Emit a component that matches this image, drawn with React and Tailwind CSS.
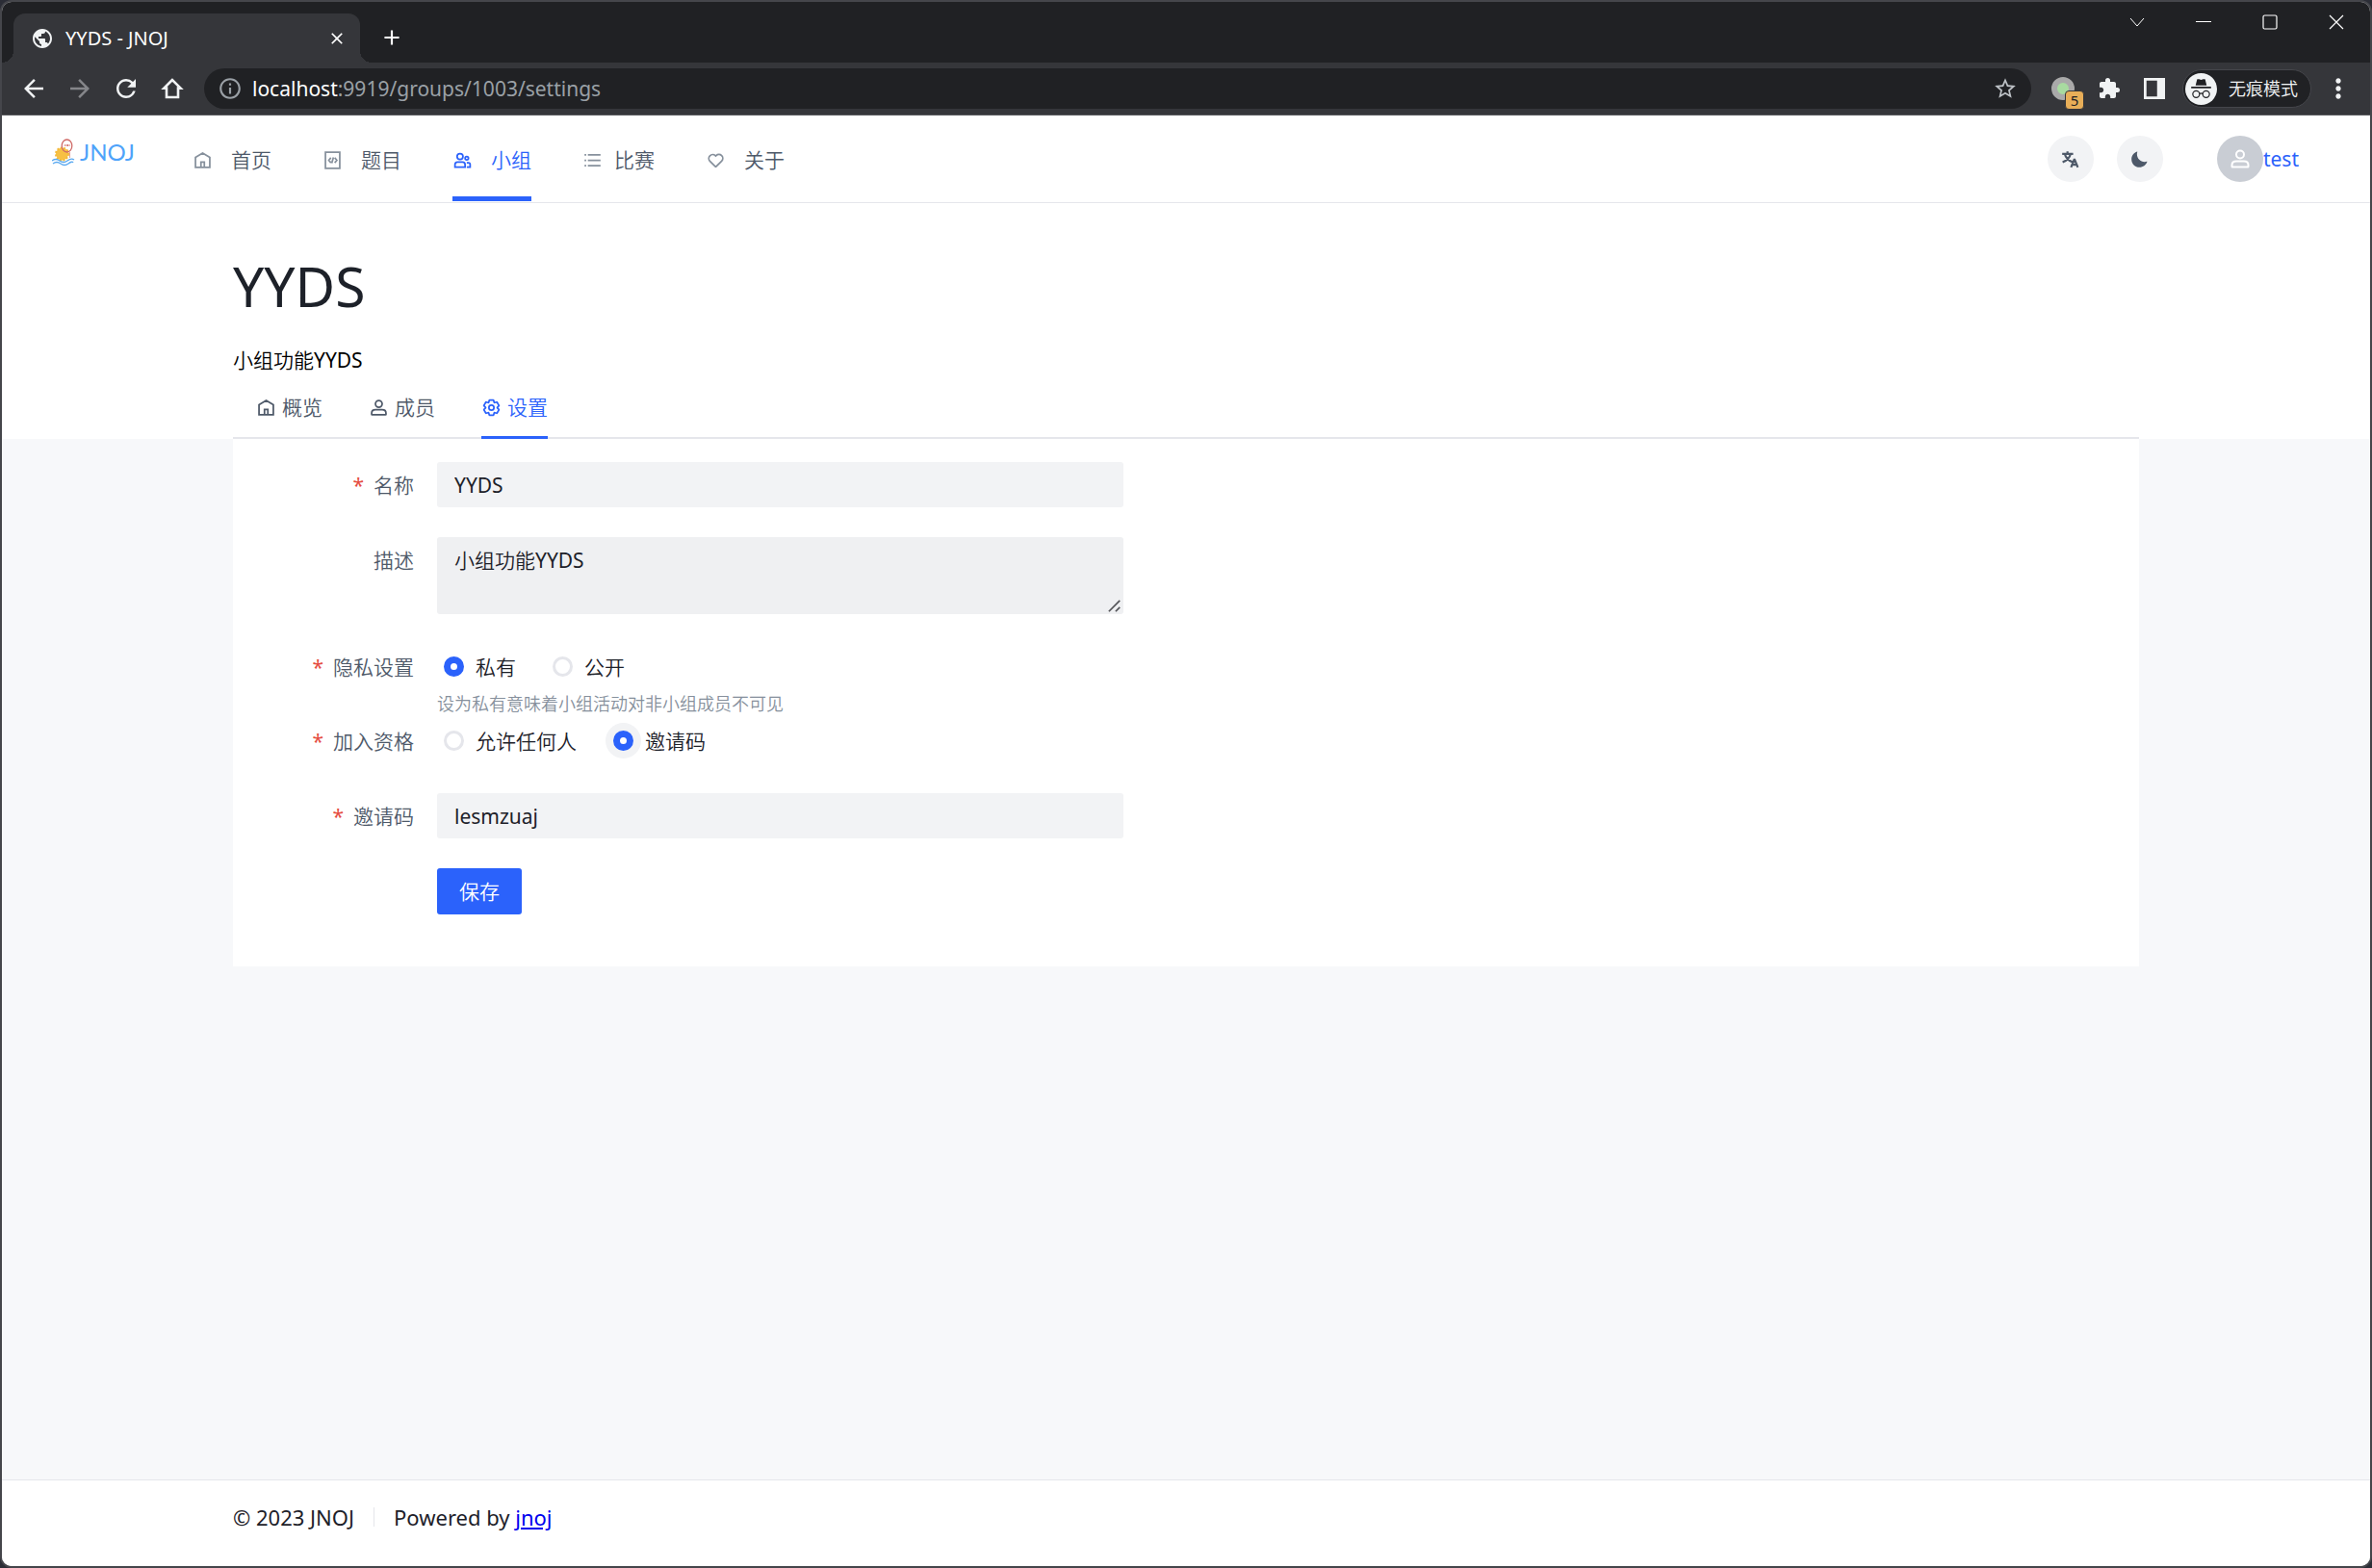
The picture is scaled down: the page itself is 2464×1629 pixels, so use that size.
import { useState } from 'react';
import { MdPublic, MdArrowBack, MdArrowForward, MdRefresh, MdInfoOutline, MdStarBorder, MdExtension, MdMoreVert, MdClose, MdAdd } from 'react-icons/md';

const navItems = [
  { key: 'home', label: '首页', icon: 'home' },
  { key: 'problems', label: '题目', icon: 'code' },
  { key: 'groups', label: '小组', icon: 'group' },
  { key: 'contests', label: '比赛', icon: 'list' },
  { key: 'about', label: '关于', icon: 'heart' },
];

const tabs = [
  { key: 'overview', label: '概览', icon: 'home' },
  { key: 'members', label: '成员', icon: 'user' },
  { key: 'settings', label: '设置', icon: 'settings' },
];

export default function App() {
  return (
    <div className="bg-[#2b2d36]">
      <div className="flex min-h-screen flex-col overflow-hidden rounded-xl border-2 border-[#45464b] bg-[#f7f8fa] font-['Noto_Sans','Noto_Sans_CJK_SC_DemiLight','Noto_Sans_CJK_SC',sans-serif] text-[21px] leading-8 text-[#1d2129]">
        <TabStrip />
        <Toolbar />
        <SiteHeader />
        <main className="grow">
          <GroupHeader />
          <SettingsForm />
        </main>
        <footer className="h-[90px] border-t border-[#e5e6eb] bg-white px-60 pt-[22px] text-[22px]">
          <div className="flex items-center">
            <span>© 2023 JNOJ</span>
            <span className="mx-5 h-5 w-px bg-[#e5e6eb]" />
            <span>
              Powered by <a href="#jnoj" className="text-[#0000ee] underline">jnoj</a>
            </span>
          </div>
        </footer>
      </div>
    </div>
  );
}

function TabStrip() {
  return (
    <div className="flex h-[63px] items-end justify-between bg-[#202124] pl-3 text-white">
      <div className="flex items-end">
        <div className="relative flex h-[51px] w-[360px] items-center rounded-t-xl bg-[#35363a] pr-[14px] pl-[18px]">
          <span className="absolute bottom-0 -left-3 size-3 bg-[radial-gradient(circle_at_0_0,transparent_12px,#35363a_12px)]" />
          <span className="absolute -right-3 bottom-0 size-3 bg-[radial-gradient(circle_at_100%_0,transparent_12px,#35363a_12px)]" />
          <MdPublic className="size-6 text-[#f1f3f4]" />
          <span className="ml-3 grow text-[20px]">YYDS - JNOJ</span>
          <button type="button" aria-label="Close tab">
            <MdClose className="size-5" />
          </button>
        </div>
        <button type="button" aria-label="New tab" className="mb-[13px] ml-5">
          <MdAdd className="size-[26px]" />
        </button>
      </div>
      <div className="flex h-full items-start gap-[53px] pt-[13px] pr-[27px]">
        <button type="button" aria-label="Search tabs"><Glyph name="chevron" /></button>
        <button type="button" aria-label="Minimize"><Glyph name="minimize" /></button>
        <button type="button" aria-label="Maximize"><Glyph name="maximize" /></button>
        <button type="button" aria-label="Close"><Glyph name="close" /></button>
      </div>
    </div>
  );
}

function Toolbar() {
  return (
    <div className="flex h-[55px] items-center border-b border-[#5a5b5f] bg-[#35363a] pr-[17px] pl-[18px] text-[#f1f3f4]">
      <div className="flex items-center gap-[18px]">
        <button type="button" aria-label="Back"><MdArrowBack className="size-[30px]" /></button>
        <button type="button" aria-label="Forward"><MdArrowForward className="size-[30px] text-[#85868a]" /></button>
        <button type="button" aria-label="Reload"><MdRefresh className="size-[30px]" /></button>
        <button type="button" aria-label="Home"><Glyph name="house" className="size-[30px]" /></button>
      </div>
      <div className="ml-[18px] flex h-[42px] grow items-center rounded-full bg-[#202124] px-[14px]">
        <MdInfoOutline className="size-[26px] text-[#9aa0a6]" />
        <span className="ml-[10px] grow text-[#9aa0a6]">
          <span className="text-white">localhost</span>:9919/groups/1003/settings
        </span>
        <MdStarBorder className="size-[26px] text-[#bdc1c6]" />
      </div>
      <div className="relative ml-[21px] size-6 rounded-full border-[6px] border-[#a9a9a9] bg-[#a8dba0]">
        <span className="absolute top-2 left-2 flex size-5 items-center justify-center rounded-[4px] border border-[#35363a] bg-[#e8ae58] text-[15px] text-[#202124]">5</span>
      </div>
      <MdExtension className="ml-6 size-6" />
      <Glyph name="panel" className="ml-6 size-[22px]" />
      <div className="ml-[18px] flex h-10 items-center rounded-full border border-[#45464b] bg-[#202124] pr-[13px] pl-[2px] text-[18px]">
        <Glyph name="incognito" className="mr-3 size-[33px]" />
        无痕模式
      </div>
      <MdMoreVert className="ml-3 size-8" />
    </div>
  );
}

function SiteHeader() {
  return (
    <header className="flex h-[91px] justify-between border-b border-[#e5e6eb] bg-white pr-[74px] pl-[52px]">
      <div className="flex">
        <a href="#home" className="mt-5 flex h-9 items-center" aria-label="JNOJ">
          <Logo />
        </a>
        <nav className="ml-14 flex gap-[53px]">
          {navItems.map((item) => (
            <a
              key={item.key}
              href={`#${item.key}`}
              className={
                item.key === 'groups'
                  ? 'flex h-[89px] items-center border-b-[5px] border-[#2b62fb] pt-2 text-[#2b62fb]'
                  : 'flex h-[89px] items-center border-b-[5px] border-transparent pt-2 text-[#4e5969]'
              }
            >
              <Icon name={item.icon} className={item.key === 'groups' ? 'size-[21px]' : 'size-[21px] text-[#86909c]'} />
              <span className={item.icon === 'list' ? 'ml-3' : 'ml-[19px]'}>{item.label}</span>
            </a>
          ))}
        </nav>
      </div>
      <div className="flex items-center">
        <button type="button" aria-label="Language" className="flex size-12 items-center justify-center rounded-full bg-[#f2f3f5] text-[#4e5969]">
          <Icon name="language" className="size-[21px]" />
        </button>
        <button type="button" aria-label="Dark mode" className="ml-6 flex size-12 items-center justify-center rounded-full bg-[#f2f3f5] text-[#4e5969]">
          <Icon name="moon" className="size-[21px]" />
        </button>
        <a href="#user" className="ml-14 flex items-center text-[#2b62fb]">
          <span className="flex size-12 items-center justify-center rounded-full bg-[#c9cdd4] text-white">
            <Icon name="user" className="size-6" />
          </span>
          test
        </a>
      </div>
    </header>
  );
}

function GroupHeader() {
  return (
    <section className="bg-white px-60 pt-11">
      <h1 className="text-[57px] leading-[84px]">YYDS</h1>
      <p className="mt-[19px] text-black">小组功能YYDS</p>
      <div className="mt-[3px] flex gap-12 border-b-2 border-[#e5e6eb] pl-6">
        {tabs.map((tab) => (
          <button
            key={tab.key}
            type="button"
            className={
              tab.key === 'settings'
                ? '-mb-[2px] flex h-[63px] items-center gap-[6px] border-b-[3px] border-[#2b62fb] text-[#2b62fb]'
                : '-mb-[2px] flex h-[63px] items-center gap-[6px] border-b-[3px] border-transparent text-[#4e5969]'
            }
          >
            <Icon name={tab.icon} className="size-[21px]" />
            {tab.label}
          </button>
        ))}
      </div>
    </section>
  );
}

function SettingsForm() {
  const [privacy, setPrivacy] = useState('private');
  const [membership, setMembership] = useState('code');

  return (
    <section className="mx-60 bg-white pt-6 pb-[54px]">
      <form className="w-[46.7%]">
        <Field label="名称" htmlFor="name" required>
          <input id="name" defaultValue="YYDS" className="h-[47px] w-full rounded-[3px] bg-[#f2f3f5] px-[18px]" />
        </Field>
        <Field label="描述" htmlFor="description">
          <div className="relative w-full">
            <textarea id="description" defaultValue="小组功能YYDS" className="block h-20 w-full resize-none rounded-[3px] bg-[#eff0f2] px-[18px] py-2" />
            <Glyph name="resize" className="absolute right-[2px] bottom-[1px] size-[14px] text-[#55565a]" />
          </div>
        </Field>
        <Field label="隐私设置" required help="设为私有意味着小组活动对非小组成员不可见">
          <Radio name="privacy" label="私有" checked={privacy === 'private'} onChange={() => setPrivacy('private')} />
          <Radio name="privacy" label="公开" checked={privacy === 'public'} onChange={() => setPrivacy('public')} />
        </Field>
        <Field label="加入资格" required>
          <Radio name="membership" label="允许任何人" checked={membership === 'any'} onChange={() => setMembership('any')} />
          <Radio name="membership" label="邀请码" hover checked={membership === 'code'} onChange={() => setMembership('code')} />
        </Field>
        <Field label="邀请码" htmlFor="code" required>
          <input id="code" defaultValue="lesmzuaj" className="h-[47px] w-full rounded-[3px] bg-[#f2f3f5] px-[18px]" />
        </Field>
        <button type="button" className="ml-[212px] block h-12 rounded-[3px] bg-[#2b62fb] px-[23px] text-white">保存</button>
      </form>
    </section>
  );
}

function Field({ label, htmlFor, required, help, children }) {
  const LabelTag = htmlFor ? 'label' : 'span';

  return (
    <div className={help ? 'flex' : 'mb-[31px] flex'}>
      <LabelTag htmlFor={htmlFor} className="mr-6 flex h-[47px] w-[188px] shrink-0 items-center justify-end gap-[10px] text-[#4e5969]">
        {required && <span className="text-[#e54d42]">*</span>}
        {label}
      </LabelTag>
      <div className="min-w-0 grow">
        <div className="flex min-h-[47px] items-center gap-[31px]">{children}</div>
        {help && <p className="text-[18px] leading-[30px] text-[#86909c]">{help}</p>}
      </div>
    </div>
  );
}

function Radio({ name, label, checked, onChange, hover }) {
  return (
    <label className="flex items-center gap-3 pl-[7px] text-[#1d2129]">
      <input
        type="radio"
        name={name}
        checked={checked}
        onChange={onChange}
        className={
          hover
            ? 'size-[21px] appearance-none rounded-full border-[3px] border-[#e5e6eb] bg-white ring-8 ring-[#f2f3f5] checked:border-[7px] checked:border-[#2b62fb]'
            : 'size-[21px] appearance-none rounded-full border-[3px] border-[#e5e6eb] bg-white checked:border-[7px] checked:border-[#2b62fb]'
        }
      />
      {label}
    </label>
  );
}

function Logo() {
  return (
    <svg className="h-9 w-[90px]" viewBox="0 0 90 36" fill="none" aria-hidden="true">
      <circle cx="10.500" cy="20" r="6.500" fill="#f7c044" />
      <circle cx="10.500" cy="20" r="6.500" stroke="#f3b93a" strokeWidth="2" strokeDasharray="2 1.500" />
      <ellipse cx="15.500" cy="11.500" rx="5.300" ry="6.500" stroke="#cf6a67" strokeWidth="1.300" />
      <path d="M12.500 11h1.500m1-1v2m1.500-2v2m1-1h1.500" stroke="#cf6a67" />
      <path d="M18.500 18v6" stroke="#e3a3a0" />
      <path d="M0 27q4-3 8 0t8 0 7-1M1 30q4-3 8 0t8 0 5-1" stroke="#5aa9f0" strokeWidth="1.300" />
      <text x="29" y="27" fontSize="24" fill="#4ea3fa" fontFamily="Lato">JNOJ</text>
    </svg>
  );
}

function Glyph({ name, className = 'size-4' }) {
  const glyphs = {
    chevron: <path d="m1 4 7 8 7-8" strokeWidth="1" />,
    minimize: <path d="M0 7.500h16" />,
    maximize: <rect x="1" y="1" width="14" height="14" rx="1.500" />,
    close: <path d="m1 1 14 14M15 1 1 15" />,
    house: <path d="M8 3.200 3.400 7.800h1.400v5h6.400v-5h1.400Z" strokeWidth="1.400" />,
    panel: <path fill="currentColor" stroke="none" fillRule="evenodd" d="M0 0h16v16H0ZM2 2h8v12H2Z" />,
    resize: <path d="M1 14 14 1M9 14l5-5" strokeWidth="2" />,
    incognito: (
      <>
        <circle cx="8" cy="8" r="8" fill="#f1f3f4" stroke="none" />
        <path fill="#202124" stroke="none" d="M6 3h1l1 .4L9 3h1l.8 3.200H5.200ZM3 6.800h10v.8H3Z" />
        <circle cx="5.500" cy="10.600" r="1.700" stroke="#202124" strokeWidth=".6" />
        <circle cx="10.500" cy="10.600" r="1.700" stroke="#202124" strokeWidth=".6" />
        <path d="M7.200 10.400q.8-.5 1.600 0" stroke="#202124" strokeWidth=".6" />
      </>
    ),
  };

  return (
    <svg className={className} viewBox="0 0 16 16" fill="none" stroke="currentColor" strokeWidth="1.200" aria-hidden="true">
      {glyphs[name]}
    </svg>
  );
}

function Icon({ name, className }) {
  const icons = {
    home: <path d="M7 17 24 7l17 10v24H7V17ZM20 28h8v13h-8V28Z" />,
    code: <path d="M7 5h34v38H7zM20 18l-5 6 5 6m9-12 5 6-5 6M26 17l-4 14" />,
    list: <path d="M13 24h30M5 11h4m4 26h30M13 11h30M5 24h4M5 37h4" />,
    heart: <path d="M38 12.900a9.200 9.200 0 0 1 0 13L24.700 39.400a1 1 0 0 1-1.400 0L10 25.900a9.200 9.200 0 0 1 13-13l1 1 1-1a9.200 9.200 0 0 1 13 0Z" />,
    user: <path d="M7 37c0-4.970 4.030-8 9-8h16c4.970 0 9 3.030 9 8v3a1 1 0 0 1-1 1H8a1 1 0 0 1-1-1v-3ZM32 15a8 8 0 1 1-16 0 8 8 0 0 1 16 0Z" />,
    group: <path d="M25 15a7 7 0 1 1-14 0 7 7 0 0 1 14 0ZM38 19a4 4 0 1 1-8 0 4 4 0 0 1 8 0ZM6 34a6 6 0 0 1 6-6h12a6 6 0 0 1 6 6v6H6v-6ZM34 30h4a4 4 0 0 1 4 4v6h-8" />,
    settings: <path d="M18.797 6.732A1 1 0 0 1 19.760 6h8.480a1 1 0 0 1 .964.732l1.285 4.628a1 1 0 0 0 1.213.7l4.651-1.200a1 1 0 0 1 1.116.468l4.240 7.344a1 1 0 0 1-.153 1.200L38.193 23.300a1 1 0 0 0 0 1.402l3.364 3.427a1 1 0 0 1 .153 1.200l-4.240 7.344a1 1 0 0 1-1.116.468l-4.650-1.200a1 1 0 0 0-1.214.7l-1.285 4.628a1 1 0 0 1-.964.732h-8.480a1 1 0 0 1-.963-.732L17.510 36.640a1 1 0 0 0-1.213-.7l-4.650 1.200a1 1 0 0 1-1.116-.468l-4.240-7.344a1 1 0 0 1 .153-1.200L9.809 24.700a1 1 0 0 0 0-1.402l-3.364-3.427a1 1 0 0 1-.153-1.200l4.240-7.344a1 1 0 0 1 1.116-.468l4.650 1.200a1 1 0 0 0 1.213-.7l1.286-4.628ZM30 24a6 6 0 1 1-12 0 6 6 0 0 1 12 0Z" />,
    language: <path strokeWidth="5" d="m42 43-2.385-6M26 43l2.384-6m11.231 0-.795-2-4.180-10h-1.280l-4.181 10-.795 2m11.231 0h-11.230M17 5l1 5M5 11h26M11 11s1.889 7.826 6.611 12.174C22.333 27.522 30 31 30 31M25 11s-1.889 7.826-6.611 12.174C13.667 27.522 6 31 6 31" />,
    moon: <path fill="currentColor" stroke="none" d="M42.108 29.769c.124-.387-.258-.736-.645-.613A17.990 17.990 0 0 1 36 30c-9.941 0-18-8.059-18-18 0-1.904.296-3.740.844-5.463.123-.387-.226-.768-.613-.645C10.558 8.334 5 15.518 5 24c0 10.493 8.507 19 19 19 8.482 0 15.666-5.558 18.108-13.231Z" />,
  };

  return (
    <svg className={className} viewBox="0 0 48 48" fill="none" stroke="currentColor" strokeWidth="4" aria-hidden="true">
      {icons[name]}
    </svg>
  );
}
